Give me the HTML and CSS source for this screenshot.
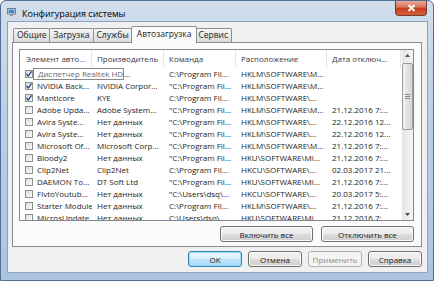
FILE: index.html
```html
<!DOCTYPE html>
<html lang="ru">
<head>
    <meta charset="UTF-8">
    <title>Конфигурация системы</title>
    <link rel="stylesheet" href="styles.css">
</head>
<body>
    <div class="window">
        <div class="titlebar">
            <svg class="app-icon" width="9" height="8" viewBox="0 0 9 8">
                <rect x="0.5" y="0.5" width="8" height="5.5" fill="#e8eef5" stroke="#6f7f92"/>
                <rect x="1.5" y="1.5" width="6" height="3.5" fill="#4a86c8"/>
                <rect x="3" y="6" width="3" height="2" fill="#8a96a4"/>
            </svg>
            <span class="title">Конфигурация системы</span>
            <div class="close-btn">
                <svg width="9" height="8" viewBox="0 0 9 8">
                    <path d="M1.5 1 L7.5 7 M7.5 1 L1.5 7" stroke="#fff" stroke-width="1.8"/>
                </svg>
            </div>
        </div>

        <div class="client">
            <div class="tabs">
                <div class="tab">Общие</div>
                <div class="tab">Загрузка</div>
                <div class="tab">Службы</div>
                <div class="tab active">Автозагрузка</div>
                <div class="tab">Сервис</div>
            </div>

            <div class="tab-panel">
                <div class="listview">
                    <div class="list-main">
                        <div class="list-row list-header">
                            <div class="cell head first">Элемент авто...</div>
                            <div class="cell head">Производитель</div>
                            <div class="cell head">Команда</div>
                            <div class="cell head">Расположение</div>
                            <div class="cell head">Дата отключ...</div>
                        </div>
                        <div id="rows"></div>
                    </div>
                    <div class="scrollbar">
                        <div class="sb-btn">
                            <svg width="5" height="3" viewBox="0 0 5 3"><path d="M0 3 L2.5 0 L5 3 Z" fill="#4d4d4d"/></svg>
                        </div>
                        <div class="sb-track">
                            <div class="sb-thumb">
                                <span></span><span></span><span></span>
                            </div>
                        </div>
                        <div class="sb-btn">
                            <svg width="5" height="3" viewBox="0 0 5 3"><path d="M0 0 L2.5 3 L5 0 Z" fill="#4d4d4d"/></svg>
                        </div>
                    </div>
                    <div class="hint">Диспетчер Realtek HD</div>
                </div>
                <div class="panel-buttons">
                    <button class="btn wide">Включить все</button>
                    <button class="btn wide">Отключить все</button>
                </div>
            </div>

            <div class="dialog-buttons">
                <button class="btn default">OK</button>
                <button class="btn">Отмена</button>
                <button class="btn" disabled>Применить</button>
                <button class="btn">Справка</button>
            </div>
        </div>
    </div>

    <script>
    var items = [
        [true, "", "Semico...", "C:\\Program Fil...", "HKLM\\SOFTWARE\\M...", ""],
        [true, "NVIDIA Back...", "NVIDIA Corpor...", "\"C:\\Program Fil...", "HKLM\\SOFTWARE\\M...", ""],
        [true, "Manticore", "KYE", "C:\\Program Fil...", "HKLM\\SOFTWARE\\...", ""],
        [false, "Adobe Upda...", "Adobe System...", "\"C:\\Program Fil...", "HKLM\\SOFTWARE\\M...", "21.12.2016 7:..."],
        [false, "Avira Syste...", "Нет данных", "\"C:\\Program Fil...", "HKLM\\SOFTWARE\\...", "22.12.2016 12..."],
        [false, "Avira Syste...", "Нет данных", "\"C:\\Program Fil...", "HKLM\\SOFTWARE\\...", "22.12.2016 12..."],
        [false, "Microsoft Of...", "Microsoft Corp...", "\"C:\\Program Fil...", "HKLM\\SOFTWARE\\M...", "21.12.2016 7:..."],
        [false, "Bloody2", "Нет данных", "\"C:\\Program Fil...", "HKU\\SOFTWARE\\Mi...", "21.12.2016 7:..."],
        [false, "Clip2Net", "Clip2Net", "C:\\Program Fil...", "HKCU\\SOFTWARE\\...", "02.03.2017 21..."],
        [false, "DAEMON To...", "DT Soft Ltd", "\"C:\\Program Fil...", "HKU\\SOFTWARE\\Mi...", "21.12.2016 7:..."],
        [false, "FlvtoYoutub...", "Нет данных", "\"C:\\Users\\dsq\\...", "HKCU\\SOFTWARE\\...", "20.03.2017 5:..."],
        [false, "Starter Module", "Нет данных", "C:\\Program Fil...", "HKLM\\SOFTWARE\\...", "21.12.2016 7:..."],
        [false, "MicrosUpdate...", "Нет данных", "C:\\Users\\dsq\\...", "HKU\\SOFTWARE\\Mi...", "21.12.2016 7:..."]
    ];

    var checkSvg = '<svg width="6" height="6" viewBox="0 0 6 6"><path d="M0.5 3 L2.3 5 L5.5 0.5" fill="none" stroke="#2a4a8a" stroke-width="1.3"/></svg>';

    var rows = document.getElementById("rows");
    items.forEach(function(item) {
        var row = document.createElement("div");
        row.className = "list-row";
        var html = '<div class="cell first"><span class="check">' + (item[0] ? checkSvg : '') + '</span><span class="name">' + item[1] + '</span></div>';
        for (var i = 2; i < item.length; i++) {
            html += '<div class="cell">' + item[i] + '</div>';
        }
        row.innerHTML = html;
        rows.appendChild(row);
    });
    </script>
</body>
</html>
```

FILE: styles.css
```css
body {
    margin: 0;
    font-family: "Open Sans", "Noto Sans", sans-serif;
    font-size: 8px;
    color: #1e1e1e;
}

.window {
    width: 434px;
    height: 281px;
    box-sizing: border-box;
    border: 1px solid #4f6f97;
    border-radius: 6px 6px 0 0;
    background: linear-gradient(#d2deec, #bccfe6 40%, #adc4e1);
    display: flex;
    flex-direction: column;
    overflow: hidden;
}

/* title bar */
.titlebar {
    height: 20px;
    display: flex;
    align-items: center;
    flex-shrink: 0;
}

.app-icon {
    margin-left: 6px;
    margin-top: 2px;
}

.title {
    margin-left: 6px;
    margin-top: 4px;
    font-size: 9px;
    color: #000;
}

.close-btn {
    margin-left: auto;
    margin-right: 6px;
    align-self: flex-start;
    width: 32px;
    height: 15px;
    box-sizing: border-box;
    border: 1px solid #7a3a2d;
    border-top: none;
    border-radius: 0 0 4px 4px;
    background: linear-gradient(#e9a898, #d8735a 45%, #c63a1e 50%, #d4603c);
    display: flex;
    align-items: center;
    justify-content: center;
}

/* client area */
.client {
    flex: 1;
    margin: 0 5px 7px 6px;
    border: 1px solid #8da2bf;
    background: #f0f0f0;
    padding: 4px 0 5px;
    display: flex;
    flex-direction: column;
}

.tabs {
    height: 16px;
    display: flex;
    align-items: flex-end;
    padding-left: 6px;
    position: relative;
    z-index: 1;
    font-size: 8.5px;
}

.tab {
    height: 14px;
    box-sizing: border-box;
    border: 1px solid #8c8e94;
    border-bottom: none;
    border-radius: 2px 2px 0 0;
    background: linear-gradient(#f6f6f6, #e8e8e8 50%, #dcdcdc);
    padding: 0 3px;
    margin-left: -1px;
    line-height: 12px;
    white-space: nowrap;
}

.tab.active {
    height: 17px;
    background: #fbfbfb;
    margin: 0 -2px -1px -2px;
    padding: 0 5px;
    line-height: 14px;
    position: relative;
}

.tab-panel {
    height: 205px;
    box-sizing: border-box;
    margin: 0 5px 0 4px;
    border: 1px solid #898c95;
    background: #fbfbfb;
    padding: 6px 7px 4px 6px;
    display: flex;
    flex-direction: column;
}

/* list view */
.listview {
    height: 172px;
    box-sizing: border-box;
    border: 1px solid #828790;
    background: #fff;
    display: flex;
    position: relative;
}

.list-main {
    flex: 1;
    overflow: hidden;
}

.list-row {
    display: grid;
    grid-template-columns: 72px 72px 72px 91px 74px;
    height: 12px;
    line-height: 12px;
}

.list-header {
    height: 18px;
    line-height: 18px;
}

.cell {
    padding-left: 5px;
    white-space: nowrap;
    overflow: hidden;
}

.cell.head {
    border-right: 1px solid #e3e6ea;
    color: #3a3a3a;
}

.cell.head.first {
    padding-left: 6px;
}

.cell.first {
    display: flex;
    align-items: center;
    gap: 4px;
}

.check {
    width: 8px;
    height: 8px;
    flex-shrink: 0;
    box-sizing: border-box;
    border: 1px solid #8e8f8f;
    background: linear-gradient(135deg, #dcdcdc, #fbfbfb);
    display: flex;
    align-items: center;
    justify-content: center;
}

.hint {
    position: absolute;
    left: 13px;
    top: 18px;
    width: 91px;
    height: 12px;
    box-sizing: border-box;
    border: 1px solid #8a8a8a;
    background: #fff;
    color: #6a6a6a;
    padding-left: 4px;
    line-height: 10px;
    white-space: nowrap;
}

/* scrollbar */
.scrollbar {
    width: 11px;
    display: flex;
    flex-direction: column;
    background: linear-gradient(90deg, #e6e6e6, #f4f4f4);
}

.sb-btn {
    height: 11px;
    display: flex;
    align-items: center;
    justify-content: center;
}

.sb-track {
    flex: 1;
}

.sb-thumb {
    margin-top: 2px;
    height: 67px;
    box-sizing: border-box;
    border: 1px solid #9a9a9a;
    border-radius: 2px;
    background: linear-gradient(90deg, #f3f3f3, #e2e2e2 50%, #d6d6d6);
    display: flex;
    flex-direction: column;
    align-items: center;
    justify-content: center;
    gap: 1px;
}

.sb-thumb span {
    width: 5px;
    height: 1px;
    background: #8a8a8a;
}

/* buttons */
.btn {
    font-family: inherit;
    font-size: 8px;
    color: #1e1e1e;
    height: 16px;
    width: 54px;
    padding: 0;
    border: 1px solid #707070;
    border-radius: 3px;
    background: linear-gradient(#f2f2f2, #ebebeb 49%, #dddddd 50%, #cfcfcf);
    box-shadow: inset 0 0 0 1px #fbfbfb;
}

.btn.wide {
    width: 93px;
}

.btn.default {
    border-color: #3c7fb1;
    background: linear-gradient(#eaf6fd, #d9f0fc 49%, #bee6fd 50%, #a7d9f5);
    box-shadow: inset 0 0 0 1px #9fdbf8;
}

.btn:disabled {
    border-color: #adb2b5;
    background: #f4f4f4;
    color: #8a8a8a;
    box-shadow: none;
}

.panel-buttons {
    margin-top: 5px;
    display: flex;
    justify-content: flex-end;
    gap: 8px;
}

.dialog-buttons {
    margin-top: 4px;
    display: flex;
    justify-content: flex-end;
    gap: 6px;
    padding-right: 5px;
}
```
